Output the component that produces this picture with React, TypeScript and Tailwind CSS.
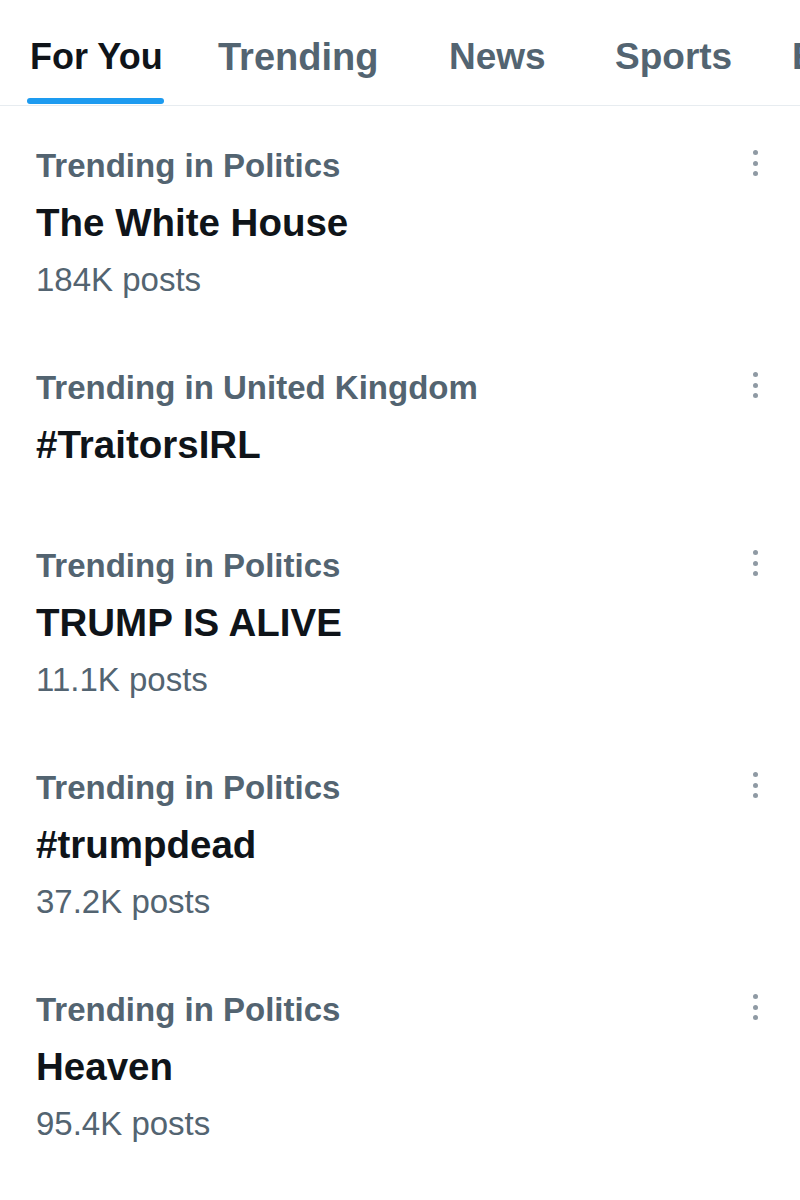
import React from "react";

type Trend = { category: string; title: string; posts?: string; extraBottom?: boolean };

const trends: Trend[] = [
  { category: "Trending in Politics", title: "The White House", posts: "184K posts" },
  { category: "Trending in United Kingdom", title: "#TraitorsIRL", extraBottom: true },
  { category: "Trending in Politics", title: "TRUMP IS ALIVE", posts: "11.1K posts" },
  { category: "Trending in Politics", title: "#trumpdead", posts: "37.2K posts" },
  { category: "Trending in Politics", title: "Heaven", posts: "95.4K posts" },
];

function Dots() {
  return (
    <div className="flex flex-col items-center gap-[5.5px] pt-[12px]">
      <span className="block h-[5px] w-[5px] rounded-full bg-[#8f9aa4]" />
      <span className="block h-[5px] w-[5px] rounded-full bg-[#8f9aa4]" />
      <span className="block h-[5px] w-[5px] rounded-full bg-[#8f9aa4]" />
    </div>
  );
}

export default function App() {
  return (
    <div
      className="w-[800px] h-[1200px] overflow-hidden bg-white"
      style={{ fontFamily: '"Liberation Sans", Arial, sans-serif' }}
    >
      {/* Tabs */}
      <div className="border-b border-[#e7ecf0] pb-[1px]">
        <div className="flex items-start whitespace-nowrap pt-[28px] pl-[30px] text-[37px] font-bold leading-[58px]">
          <div className="w-[188px] shrink-0">
            <div className="flex flex-col items-start">
              <span className="text-[36px] text-[#0f1419]">For You</span>
              <span className="mt-[12px] -ml-[3px] block h-[6px] w-[137px] rounded-full bg-[#1d9bf0]" />
            </div>
          </div>
          <div className="w-[231px] shrink-0 text-[38px] text-[#536471]">Trending</div>
          <div className="w-[166px] shrink-0 text-[#536471]">News</div>
          <div className="w-[177px] shrink-0 text-[#536471]">Sports</div>
          <div className="shrink-0 text-[#536471]">Entertainment</div>
        </div>
      </div>

      {/* Trends list */}
      <div className="pt-[6px]">
        {trends.map((t, i) => (
          <div
            key={i}
            className={
              "flex items-start justify-between pl-[36px] pr-[42px] pt-[26px] " +
              (t.extraBottom ? "pb-[38px]" : "pb-[26px]")
            }
          >
            <div className="flex flex-col">
              <div className="text-[33px] font-bold leading-[56px] text-[#536471]">{t.category}</div>
              <div className="text-[38.5px] font-bold leading-[58px] text-[#0f1419]">{t.title}</div>
              {t.posts && (
                <div className="text-[33px] leading-[56px] text-[#536471]">{t.posts}</div>
              )}
            </div>
            <Dots />
          </div>
        ))}
      </div>
    </div>
  );
}
